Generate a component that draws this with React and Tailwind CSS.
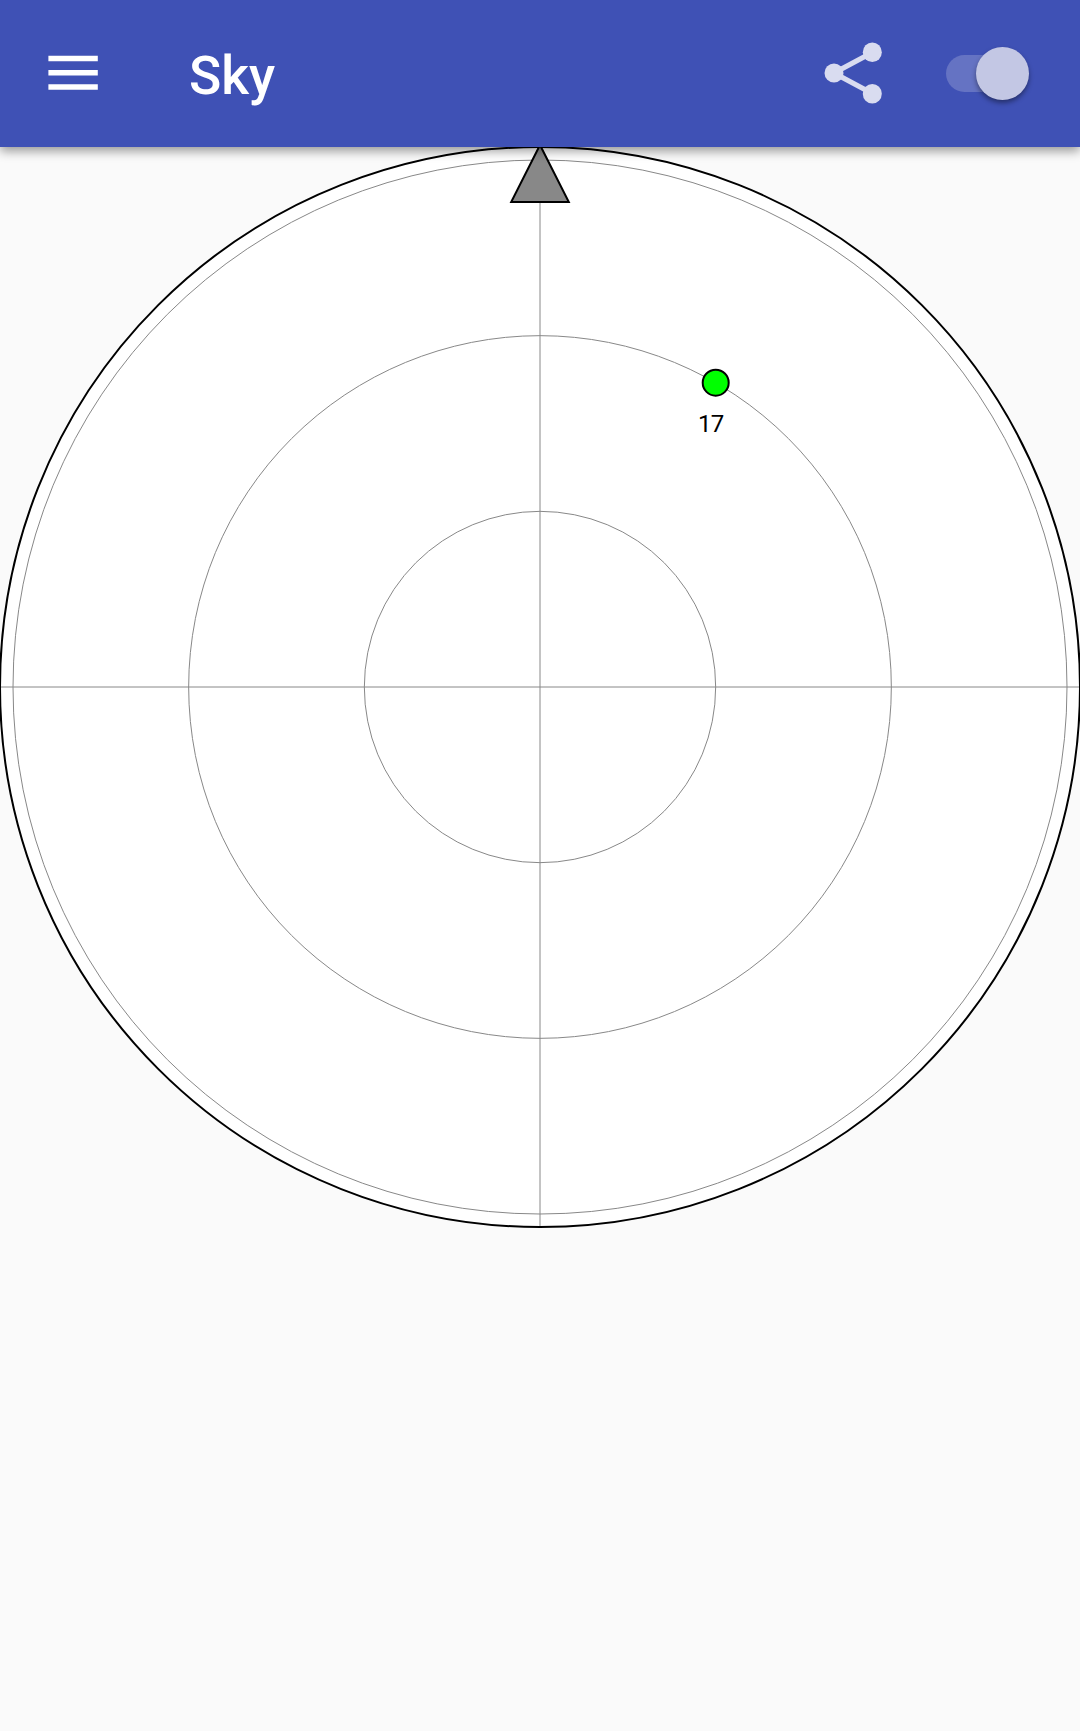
const RINGS = [175.67, 351.33, 527];

function AppBar() {
  return (
    <header className="relative z-10 flex h-[147px] items-center bg-[#3f51b5] pl-12 shadow-[0_4px_10px_rgba(0,0,0,0.4)]">
      <button aria-label="Menu" className="mb-[2px] flex w-[50px] flex-col">
        <svg className="block h-[36px] w-[50px]" viewBox="0 0 50 36" fill="#fff">
          <path d="M.4 .7H49.8V6.2H.4ZM.4 15H49.8V20.5H.4ZM.4 29.2H49.8V34.7H.4Z" />
        </svg>
      </button>
      <h1 className="mt-[6px] ml-[91px] font-[Roboto,sans-serif] text-[53.3px] leading-none font-medium text-white">Sky</h1>
      <button aria-label="Share" className="mb-[2px] ml-auto">
        <svg className="block h-[66px] w-[60px]" viewBox="0 0 60 66" fill="#d9dcf0" stroke="none">
          <path d="M50.3 12.5 12 33 50.3 53.5" fill="none" stroke="#d9dcf0" strokeWidth="5.2" />
          <circle cx="12" cy="33" r="9.5" />
          <ellipse cx="50.3" cy="12.3" rx="9.5" ry="9.8" />
          <ellipse cx="50.3" cy="53.8" rx="9.5" ry="9.8" />
        </svg>
      </button>
      <button role="switch" aria-checked="true" aria-label="GPS" className="mr-[51px] ml-[64px] flex h-[37px] w-[83px] items-center rounded-full">
        <span className="h-[37px] w-[70px] shrink-0 rounded-full bg-[#6573c3]" />
        <span className="-ml-10 size-[53px] shrink-0 rounded-full bg-[#c3c7e4] shadow-[0_3px_5px_rgba(0,0,0,0.4)]" />
      </button>
    </header>
  );
}

function SkyPlot() {
  return (
    <svg className="block h-[1080px] w-[1080px] overflow-visible" viewBox="0 0 1080 1080">
      <circle cx="540" cy="540" r="540" fill="#fff" />
      <g fill="none" stroke="#888" strokeWidth="1">
        {RINGS.map((r) => (
          <circle key={r} cx="540" cy="540" r={r} />
        ))}
        <path d="M0 540H1080M540 0V1080" />
      </g>
      <circle cx="540" cy="540" r="540" fill="none" stroke="#000" strokeWidth="2" />
      <path d="M540 -2 511.2 55H568.8Z" fill="#888" stroke="#000" strokeWidth="2" />
      <circle cx="715.7" cy="235.7" r="13" fill="#0f0" stroke="#000" strokeWidth="2" />
      <text x="698" y="285" className="font-[Roboto,sans-serif] text-[24px]" textLength="26.2" fill="#000">17</text>
    </svg>
  );
}

export default function App() {
  return (
    <main className="min-h-[1731px] w-[1080px] overflow-hidden bg-[#fafafa]">
      <AppBar />
      <SkyPlot />
    </main>
  );
}
